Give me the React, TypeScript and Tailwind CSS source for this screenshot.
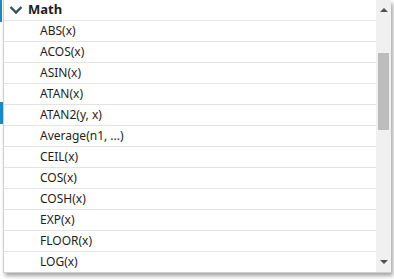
const items = [
  'ABS(x)',
  'ACOS(x)',
  'ASIN(x)',
  'ATAN(x)',
  'ATAN2(y, x)',
  'Average(n1, ...)',
  'CEIL(x)',
  'COS(x)',
  'COSH(x)',
  'EXP(x)',
  'FLOOR(x)',
  'LOG(x)',
];

const App = () => {
  return (
    <div
      className="relative w-[394px] h-[279px] bg-white overflow-hidden"
      style={{ fontFamily: "'Noto Sans', 'Open Sans', sans-serif" }}
    >
      {/* editor gutter marks behind the popup */}
      <div className="absolute left-0 top-0 w-[2px] h-[22px] bg-[#1e8bc3]" />
      <div className="absolute left-0 top-[102px] w-[3px] h-[22px] bg-[#1e8bc3]" />

      {/* popup */}
      <div className="absolute left-[3px] top-0 w-[388px] h-[273px] flex bg-white border-l border-b border-[#cfcfcf] shadow-[2px_3px_4px_rgba(0,0,0,0.35)]">
        <div className="flex-1 flex flex-col overflow-hidden">
          <div className="h-[21px] shrink-0 flex items-center border-b border-[#e3e3e3]">
            <svg className="ml-[5px]" width="14" height="10" viewBox="0 0 14 10">
              <polyline points="1.5,2 7,7.5 12.5,2" fill="none" stroke="#37505c" strokeWidth="2.4" />
            </svg>
            <span className="ml-[5px] text-[13px] font-bold text-[#1e1e1e]">Math</span>
          </div>
          {items.map((item) => (
            <div
              key={item}
              className="h-[21px] shrink-0 flex items-center pl-[36px] border-b border-[#e3e3e3] text-[12px] text-[#1e1e1e]"
            >
              {item}
            </div>
          ))}
        </div>
        <div className="w-[15px] shrink-0 bg-[#f0f0f0] flex flex-col items-center">
          <div className="h-[20px] w-full flex items-center justify-center">
            <div className="w-0 h-0 border-l-[4px] border-r-[4px] border-b-[4px] border-l-transparent border-r-transparent border-b-[#505050]" />
          </div>
          <div className="mt-[33px] w-[11px] h-[77px] bg-[#bdbdbd]" />
          <div className="flex-1" />
          <div className="h-[20px] w-full flex items-center justify-center">
            <div className="w-0 h-0 border-l-[4px] border-r-[4px] border-t-[4px] border-l-transparent border-r-transparent border-t-[#505050]" />
          </div>
        </div>
      </div>
    </div>
  );
};

export default App;
